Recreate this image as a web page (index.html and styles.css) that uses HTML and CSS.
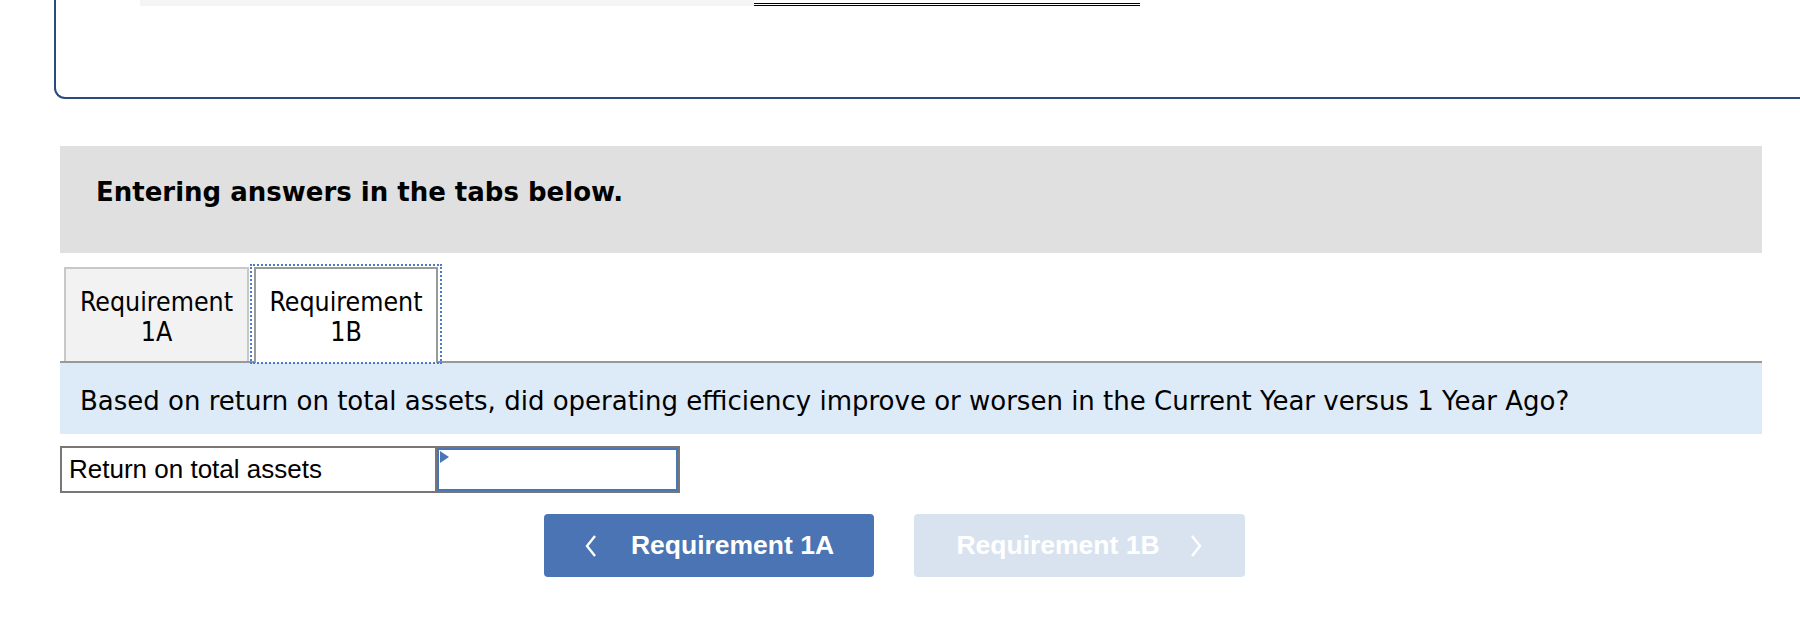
FILE: index.html
```html
<!DOCTYPE html>
<html>
<head>
<meta charset="utf-8">
<link rel="stylesheet" href="styles.css">
</head>
<body>
<div class="frame">
  <div class="frame-row">
    <div class="cell-gray"></div>
    <div class="cell-total"></div>
  </div>
</div>

<div class="section">
  <div class="instructions">Entering answers in the tabs below.</div>

  <div class="tabs">
    <div class="tab">Requirement<br>1A</div>
    <div class="tab tab-active">Requirement<br>1B</div>
  </div>

  <div class="question">Based on return on total assets, did operating efficiency improve or worsen in the Current Year versus 1 Year Ago?</div>

  <div class="answer-row">
    <div class="answer-label">Return on total assets</div>
    <div class="answer-input"><span class="flag"></span></div>
  </div>
</div>

<div class="nav">
  <div class="btn btn-prev">
    <svg class="chev" width="14" height="24" viewBox="0 0 14 24"><polyline points="11,2 3,12 11,22" fill="none" stroke="#fff" stroke-width="2.4"/></svg>
    <span>Requirement 1A</span>
  </div>
  <div class="btn btn-next">
    <span>Requirement 1B</span>
    <svg class="chev" width="14" height="24" viewBox="0 0 14 24"><polyline points="3,2 11,12 3,22" fill="none" stroke="#fff" stroke-width="2.4"/></svg>
  </div>
</div>
</body>
</html>
```
FILE: styles.css
```css
html, body {
  margin: 0;
  padding: 0;
  background: #fff;
  overflow: hidden;
}
body {
  width: 1800px;
  font-family: "DejaVu Sans", sans-serif;
  font-size: 26px;
  color: #000;
}

.frame {
  margin-left: 54px;
  margin-right: -30px;
  height: 97px;
  border-left: 2px solid #2b4b80;
  border-bottom: 2px solid #2b4b80;
  border-bottom-left-radius: 11px;
}
.frame-row {
  display: flex;
  margin-left: 84px;
}
.cell-gray {
  width: 614px;
  height: 6px;
  background: #f5f5f5;
}
.cell-total {
  width: 386px;
  height: 3px;
  border-bottom: 3px double #000;
}

.section {
  margin-left: 60px;
  width: 1702px;
}
.instructions {
  margin-top: 47px;
  height: 32px;
  padding: 30px 36px 45px 36px;
  line-height: 32px;
  background: #e0e0e0;
  font-weight: bold;
}

.tabs {
  margin-top: 14px;
  display: flex;
  align-items: flex-end;
  padding-left: 4px;
  border-bottom: 2px solid #999;
  font-family: "DejaVu Sans Condensed", "DejaVu Sans", sans-serif;
  font-stretch: condensed;
  font-size: 26.5px;
}
.tab {
  width: 181px;
  padding: 18px 0 14px 0;
  line-height: 30px;
  text-align: center;
  background: #f2f2f2;
  border: 2px solid #c8c8c8;
  border-bottom: none;
}
.tab-active {
  position: relative;
  width: 180px;
  margin-left: 5px;
  margin-bottom: -2px;
  padding-bottom: 16px;
  background: #fff;
  border-color: #9a9a9a;
}
.tab-active::after {
  content: "";
  position: absolute;
  top: -5px;
  left: -6px;
  right: -6px;
  bottom: -1px;
  border: 2px dotted #4a7bc4;
}

.question {
  height: 32px;
  padding: 22px 20px 17px 20px;
  line-height: 32px;
  background: #ddeaf7;
  white-space: nowrap;
}

.answer-row {
  margin-top: 12px;
  display: flex;
  width: 616px;
  height: 43px;
  border: 2px solid #777;
  font-family: "Liberation Sans", Arial, sans-serif;
}
.answer-label {
  width: 366px;
  padding-left: 7px;
  display: flex;
  align-items: center;
  border-right: 2px solid #777;
}
.answer-input {
  position: relative;
  flex: 1;
  border: 2px solid #4a76b8;
  background: #fff;
}
.flag {
  position: absolute;
  top: 1px;
  left: 1px;
  width: 0;
  height: 0;
  border-top: 6px solid transparent;
  border-bottom: 6px solid transparent;
  border-left: 9px solid #4a76b8;
}

.nav {
  margin-top: 21px;
  margin-left: 544px;
  display: flex;
  gap: 40px;
}
.btn {
  width: 330px;
  height: 63px;
  border-radius: 4px;
  display: flex;
  align-items: center;
  justify-content: center;
  font-family: "Liberation Sans", Arial, sans-serif;
  font-weight: bold;
  font-size: 26.5px;
  color: #fff;
}
.btn-prev {
  background: #4a74b4;
  gap: 33px;
}
.btn-next {
  width: 331px;
  background: #d9e3f0;
  gap: 29px;
}
.chev {
  display: block;
}
```
